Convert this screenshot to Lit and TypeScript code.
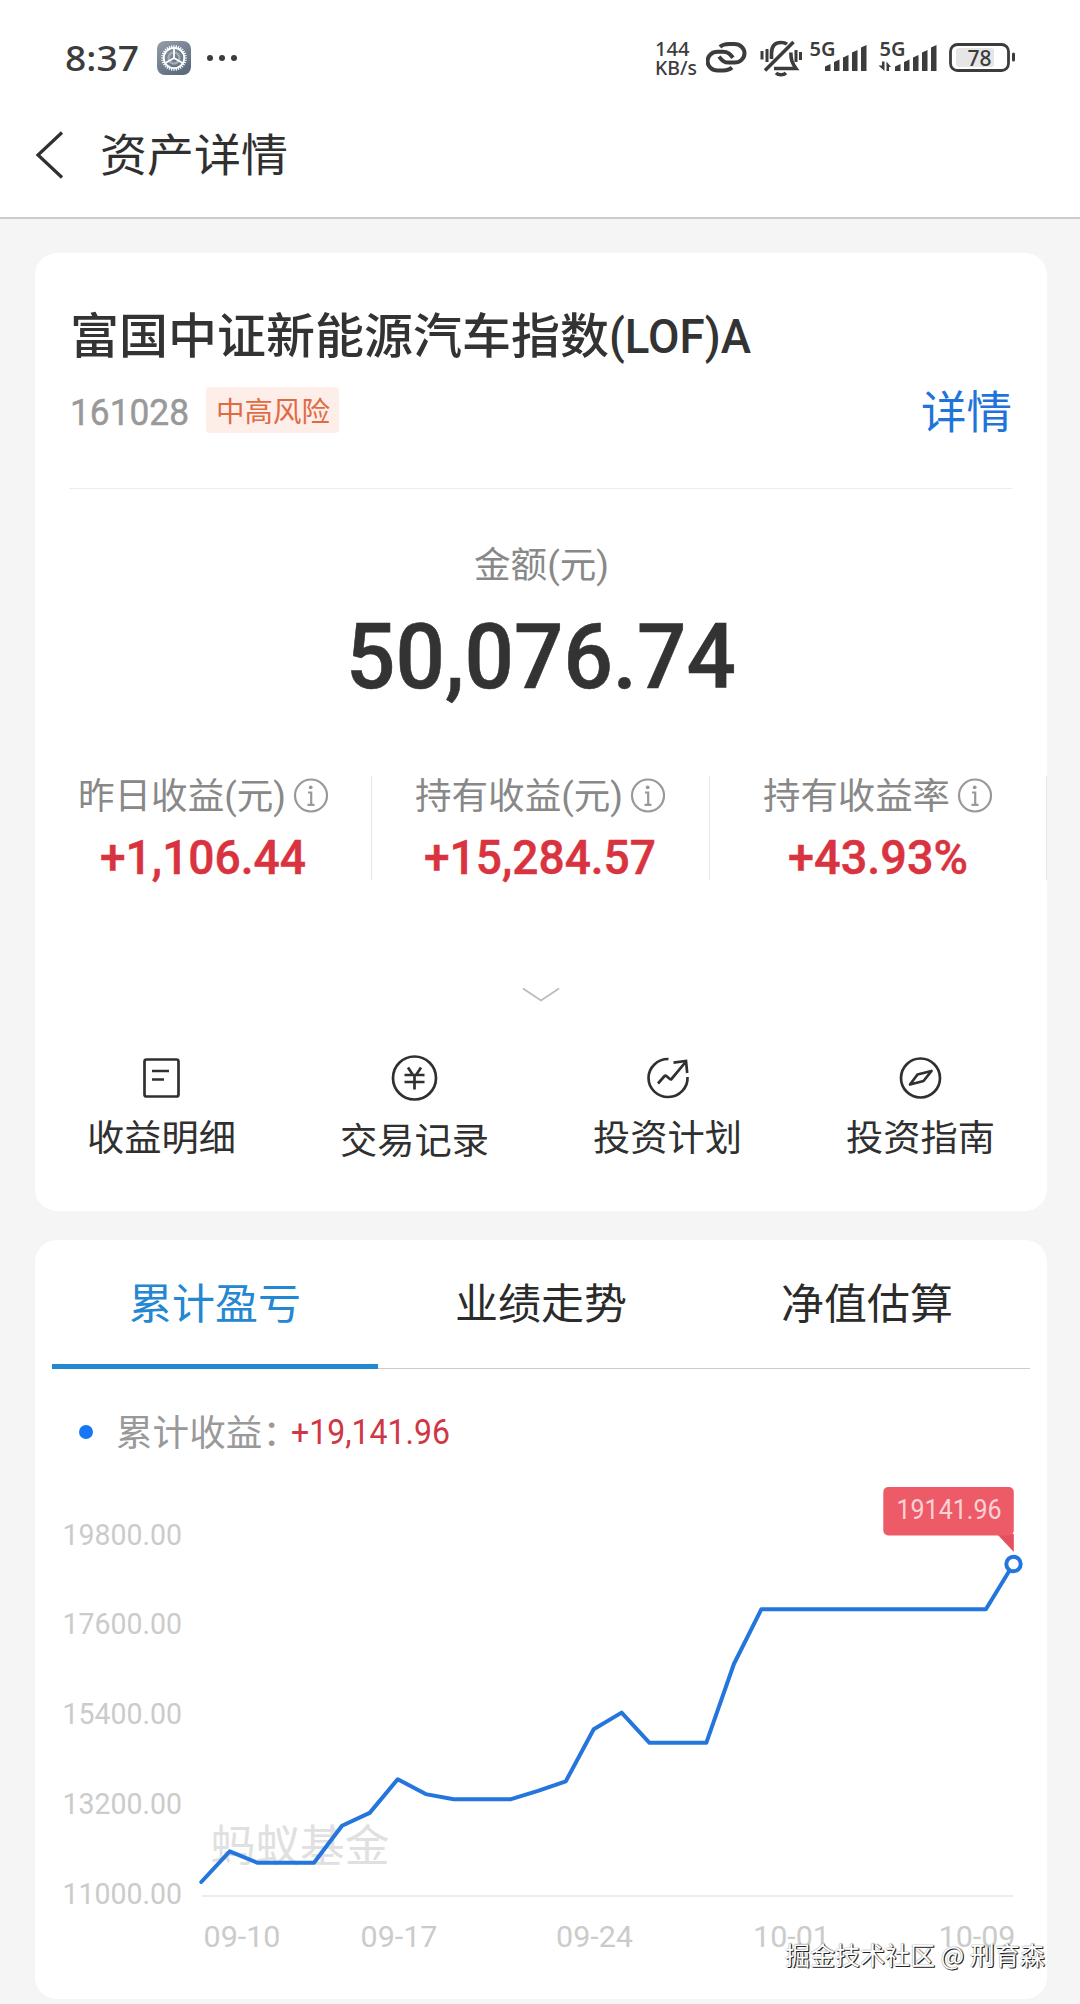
import { LitElement, html, svg, css } from "lit";
import { customElement } from "lit/decorators.js";

/** Single-line text set to an exact advance width. */
const fit = (text: string, cls: string, size: number, width: number) => html`
  <svg class="fit ${cls}" width=${width} height=${size} viewBox="0 0 ${width} ${size}">
    <text x="0" y=${size * 0.88} font-size=${size} textLength=${width} lengthAdjust="spacingAndGlyphs">${text}</text>
  </svg>`;

const TICKS = [
  { label: "19800.00", y: 1544.6 },
  { label: "17600.00", y: 1634 },
  { label: "15400.00", y: 1724.2 },
  { label: "13200.00", y: 1813.6 },
  { label: "11000.00", y: 1903.8 },
];

const DATES = [
  { label: "09-10", x: 203.5, w: 77 },
  { label: "09-17", x: 360.5, w: 77 },
  { label: "09-24", x: 556, w: 77 },
  { label: "10-01", x: 753, w: 77 },
  { label: "10-09", x: 938.5, w: 77 },
];

const POINTS: [number, number][] = [
  [201.3, 1882], [229.7, 1851.4], [257.7, 1862.8], [314, 1862.8], [342, 1825.7],
  [369.7, 1812.9], [397.7, 1779.2], [425.7, 1794.1], [453.7, 1799.3], [510.3, 1799.3],
  [538, 1790.8], [565.8, 1781.3], [593.7, 1729.3], [621.6, 1712.6], [649.5, 1742.8],
  [706.3, 1742.8], [733.9, 1664], [761.4, 1609.2], [985.9, 1609.2], [1013.5, 1564],
];

const STATS = [
  { label: "昨日收益(元)", lw: 208, value: "+1,106.44", vw: 206 },
  { label: "持有收益(元)", lw: 208, value: "+15,284.57", vw: 232 },
  { label: "持有收益率", lw: 187, value: "+43.93%", vw: 180 },
];

const ICONS = {
  list: svg`
    <rect x="6.5" y="5.5" width="34" height="37" rx="2"/>
    <path d="M14 17h17M14 25.5h12"/>`,
  yen: svg`
    <circle cx="23.5" cy="24" r="21.5"/>
    <path d="M17 13.5l5 7.5M30 13.5l-5 7.5M13.500 21h20M13.500 28h20M23.500 21v14.500"/>`,
  plan: svg`
    <path d="M24.500 5A19.500 19 0 1 0 43.500 23"/>
    <path d="M14 29.500l6.600-7.500q.700-.800 1.500-.200l4 3.400q.800.500 1.400-.200L42 7.500"/>
    <path d="M29.500 8.600L42 7l1.200 12"/>`,
  compass: svg`
    <circle cx="23.5" cy="24" r="19.5"/>
    <path stroke-linejoin="round" d="M13 30.500L20.500 20.500 34.500 17 26.500 27z"/>`,
};

const ACTIONS = [
  { icon: ICONS.list, label: "收益明细", low: false },
  { icon: ICONS.yen, label: "交易记录", low: true },
  { icon: ICONS.plan, label: "投资计划", low: false },
  { icon: ICONS.compass, label: "投资指南", low: false },
];

const TABS = ["累计盈亏", "业绩走势", "净值估算"];

const BARS = [7, 11.5, 16, 21, 26];

@customElement("status-bar")
class StatusBar extends LitElement {
  static styles = css`
    :host { display: block; }
    .bar { height: 116px; box-sizing: border-box; display: flex; align-items: center; padding: 0 64px 0 65px; }
    .fit { display: block; overflow: visible; fill: #3c3c3c; }
    .clock { font-family: "Noto Sans", sans-serif; font-weight: 500; margin-top: -2px; }
    .gear { margin-left: 18px; }
    .dots { margin-left: 15px; }
    .rate { margin-left: auto; display: flex; flex-direction: column; width: 44px; }
    .small { font-family: "Noto Sans", sans-serif; font-weight: 500; }
    .icons { display: block; margin-left: 7px; }
    .net { font: 600 19px "Noto Sans", sans-serif; }
    .pct { font: 500 21px "Noto Sans", sans-serif; }
  `;
  signal(x: number) {
    return BARS.map((h, i) => svg`<path fill="#3c3c3c" d="M${x + i * 9} 71v${-(h - 2.5)}l5.5 -2.5v${h}z"/>`);
  }
  render() {
    const teeth = Array.from({ length: 32 }, (_, i) => svg`<path d="M17 4.2v2.4" transform="rotate(${i * 11.25} 17 17)"/>`);
    return html`
      <div class="bar">
        ${fit("8:37", "clock", 35, 74)}
        <svg class="gear" width="34" height="34" viewBox="0 0 34 34">
          <defs><linearGradient id="g" x1="0" y1="0" x2=".6" y2="1">
            <stop offset="0" stop-color="#949eac"/><stop offset="1" stop-color="#5d6b7d"/></linearGradient></defs>
          <rect width="34" height="34" rx="8" fill="url(#g)"/>
          <g fill="none" stroke="#fff"><g stroke-width="1.2">${teeth}</g>
            <circle cx="17" cy="17" r="10.2" stroke-width="1.8"/>
            <circle cx="17" cy="17" r="5.5" stroke="#a3adb9" stroke-width="2.4"/>
            <path stroke-width="1.8" d="M17 17V7M17 17l-8.6 5M17 17l8.6 5"/></g>
        </svg>
        <svg class="dots" width="32" height="8" viewBox="0 0 32 8" fill="#3c3c3c">
          <circle cx="4" cy="4" r="3"/><circle cx="16" cy="4" r="3"/><circle cx="28" cy="4" r="3"/>
        </svg>
        <div class="rate">${fit("144", "small", 19.5, 34.5)}${fit("KB/s", "small", 19.5, 42)}</div>
        <svg class="icons" width="310" height="60" viewBox="706 28 310 60" fill="none" stroke="#3c3c3c">
          <g stroke-width="4">
            <path d="M720 47C723 44 726 44 729 44H734.500A10 9.300 0 0 1 734.500 62.600H729C724 62.600 722 60.500 719 56.600"/>
            <path d="M732 67.500C729 70.400 726 70.400 723 70.400H717.500A10 9.300 0 0 1 717.500 51.800H723C728 51.800 730 54 733 57.800"/>
          </g>
          <g stroke-width="3.600">
            <path d="M793.500 42L765 70.500"/>
            <path d="M771.500 59V53.500C771.500 46 775 42.500 781 42.500C783.500 42.500 785.500 43 787 44.200"/>
            <path d="M790.800 52.500C791 60 792 63 796 68.500H774"/>
            <path stroke-width="3" d="M762 51v8.500M767 49v13M796 50v12M800.500 52v8"/>
            <path d="M776 73c2.500 2.400 7.500 2.400 10 0"/>
          </g>
          <g stroke="none" fill="#3c3c3c">
            <text class="net" x="809.500" y="56" textLength="26" lengthAdjust="spacingAndGlyphs">5G</text>
            <text class="net" x="879.500" y="56" textLength="26" lengthAdjust="spacingAndGlyphs">5G</text>
            ${this.signal(825)}${this.signal(895)}
            <path d="M882 61.500h2.500v9.500l-6-5.500h3.500zM886.500 71v-9.500l4.500 5.500h-2v4z"/>
            <rect x="956" y="48" width="38" height="19" rx="3" fill="#e6e6e6"/>
            <rect x="1012" y="52.500" width="3" height="9" rx="1.500"/>
            <text class="pct" x="967.500" y="65.500" textLength="24" lengthAdjust="spacingAndGlyphs">78</text>
          </g>
          <rect x="950.500" y="44.500" width="58" height="26" rx="7" stroke-width="2.800"/>
        </svg>
      </div>`;
  }
}

@customElement("profit-chart")
class ProfitChart extends LitElement {
  static styles = css`
    :host { display: block; }
    .chart { display: block; }
    .tick { font: 400 30px Roboto, sans-serif; fill: #cbcbcb; }
    .mark { font: 400 44px "Noto Sans CJK SC", sans-serif; fill: #e0e0e0; }
    .tip { font: 400 28.5px Roboto, sans-serif; fill: #fcd2d5; }
  `;
  render() {
    const end = POINTS[POINTS.length - 1];
    return html`
      <svg class="chart" width="1012" height="548" viewBox="35 1451 1012 548">
        ${TICKS.map((t) => svg`<text class="tick" x="62.500" y=${t.y} textLength="119.500" lengthAdjust="spacingAndGlyphs">${t.label}</text>`)}
        <path d="M202 1896H1013" stroke="#ececec" stroke-width="2"/>
        <text class="mark" x="210.500" y="1861.500" textLength="179" lengthAdjust="spacingAndGlyphs">蚂蚁基金</text>
        <polyline points=${POINTS.map((p) => p.join(",")).join(" ")} fill="none" stroke="#2475dc"
          stroke-width="4" stroke-linejoin="round" stroke-linecap="round"/>
        <circle cx=${end[0]} cy=${end[1]} r="7.200" fill="#fff" stroke="#2475dc" stroke-width="4"/>
        <path d="M997 1534H1013.800V1552z" fill="#e5505f"/>
        <rect x="883.300" y="1487" width="130.500" height="48.500" rx="5" fill="#ed5b69"/>
        <text class="tip" x="896.500" y="1518.800" textLength="105" lengthAdjust="spacingAndGlyphs">19141.96</text>
        ${DATES.map((d) => svg`<text class="tick" x=${d.x} y="1946.500" textLength=${d.w} lengthAdjust="spacingAndGlyphs">${d.label}</text>`)}
      </svg>`;
  }
}

@customElement("app-root")
class AppRoot extends LitElement {
  static styles = css`
    :host { display: block; }
    .page { position: relative; width: 1080px; height: 2004px; overflow: hidden; background: #f5f5f5; font-family: Roboto, "Noto Sans CJK SC", sans-serif; }
    .header { background: #fff; height: 219px; box-sizing: border-box; border-bottom: 2px solid #cbcbcb; }
    .nav { display: flex; align-items: center; height: 77px; padding-left: 34px; gap: 36px; }
    .fit { display: block; overflow: visible; }
    .nav-title { fill: #303030; font-weight: 400; }
    .card { width: 1012px; margin-left: 35px; border-radius: 22px; background: #fff; box-sizing: border-box; }
    .summary { height: 958px; margin-top: 34px; padding-top: 58px; }
    .name { display: flex; margin-left: 35px; height: 48px; fill: #333; font-weight: 500; }
    .meta { display: flex; align-items: center; height: 46px; margin: 28px 35px 0 35px; }
    .code { fill: #999; font-weight: 400; stroke: #999; stroke-width: 0.5px; }
    .tag { display: flex; align-items: center; justify-content: center; width: 133px; height: 46px; margin-left: 17px; border-radius: 4px; background: #fdeeea; }
    .tag-text { fill: #e26a42; margin-top: 2px; }
    .more { fill: #1f74da; margin-left: auto; margin-top: 2px; }
    .rule { height: 1px; background: #ececec; margin: 55px 35px 0 34px; }
    .amount { display: flex; flex-direction: column; align-items: center; }
    .amount-label { fill: #888; margin-top: 57px; }
    .amount-value { fill: #333; font-weight: 500; margin-top: 27px; stroke: #333; stroke-width: 0.6px; }
    .stats { display: grid; grid-template-columns: repeat(3, 1fr); margin-top: 77px; height: 103px; }
    .stat { display: flex; flex-direction: column; align-items: center; border-right: 1px solid #e6e6e6; gap: 17px; }
    .stat-head { display: flex; align-items: center; gap: 7px; height: 38px; }
    .stat-label { fill: #888; }
    .stat-value { fill: #d93340; font-weight: 500; stroke: #d93340; stroke-width: 0.5px; }
    .expand { display: block; margin: 108px auto 0; }
    .actions { display: grid; grid-template-columns: repeat(4, 1fr); margin-top: 52px; }
    .action { display: flex; flex-direction: column; align-items: center; gap: 17px; }
    .low { gap: 19.5px; }
    .glyph { display: block; }
    .action-label { fill: #303030; }
    .trend { height: 759px; margin-top: 29px; }
    .tabs { display: grid; grid-template-columns: repeat(3, 1fr); margin: 0 17px; height: 129px; box-sizing: border-box; border-bottom: 1px solid #ccc; }
    .tab { display: flex; justify-content: center; padding-top: 41.5px; fill: #2b2b2b; height: 129px; box-sizing: border-box; }
    .active { fill: #2387d2; border-bottom: 5px solid #2387d2; }
    .legend { display: flex; align-items: center; height: 38px; margin-top: 44px; padding-left: 44px; }
    .dot { width: 14px; height: 14px; border-radius: 50%; background: #1677f5; margin-right: 23px; }
    .legend-label { fill: #999; }
    .legend-value { fill: #cf3745; margin-left: -8px; margin-top: -3px; }
    .credit { position: absolute; left: 785px; top: 1936px; font: 400 25px/36px "Noto Sans CJK SC", sans-serif; white-space: nowrap; color: #fff; text-shadow: 1px 1px 0 #222, 1px 0 1px #555, 0 0 1px #777; }
  `;
  render() {
    return html`
      <div class="page">
        <div class="header">
          <status-bar></status-bar>
          <div class="nav">
            <svg width="30" height="48" viewBox="0 0 30 48" fill="none" stroke="#303030" stroke-width="3.2"><path d="M28 1.500L4 24l24 22.500"/></svg>
            ${fit("资产详情", "nav-title", 45, 188)}
          </div>
        </div>

        <div class="card summary">
          <div class="name">${fit("富国中证新能源汽车指数", "zh", 48, 539)}${fit("(LOF)A", "en", 48, 142)}</div>
          <div class="meta">
            ${fit("161028", "code", 37, 119)}
            <div class="tag">${fit("中高风险", "tag-text", 28, 114)}</div>
            ${fit("详情", "more", 45, 91)}
          </div>
          <div class="rule"></div>
          <div class="amount">
            ${fit("金额(元)", "amount-label", 36, 135)}
            ${fit("50,076.74", "amount-value", 90, 390)}
          </div>
          <div class="stats">
            ${STATS.map((s) => html`
              <div class="stat">
                <div class="stat-head">
                  ${fit(s.label, "stat-label", 36, s.lw)}
                  <svg width="35" height="35" viewBox="0 0 35 35" fill="none" stroke="#999" stroke-width="2.200">
                    <circle cx="18" cy="17.500" r="16"/>
                    <circle cx="17.700" cy="9.300" r="1.900" fill="#999" stroke="none"/>
                    <path d="M15 14.500h3.200v12.300M14.500 26.800h7"/>
                  </svg>
                </div>
                ${fit(s.value, "stat-value", 49, s.vw)}
              </div>`)}
          </div>
          <svg class="expand" width="38" height="15" viewBox="0 0 38 15" fill="none" stroke="#bbb" stroke-width="1.800"><path d="M1 1.500l18 12 18-12"/></svg>
          <div class="actions">
            ${ACTIONS.map((a) => html`
              <div class="action ${a.low ? "low" : ""}">
                <svg class="glyph" width="48" height="48" viewBox="0 0 48 48" fill="none" stroke="#303030" stroke-width="2.700">${a.icon}</svg>
                ${fit(a.label, "action-label", 36.5, 149)}
              </div>`)}
          </div>
        </div>

        <div class="card trend">
          <div class="tabs">
            ${TABS.map((t, i) => html`<div class="tab ${i === 0 ? "active" : ""}">${fit(t, "tab-text", 42, 172)}</div>`)}
          </div>
          <div class="legend">
            <span class="dot"></span>
            ${fit("累计收益：", "legend-label", 36, 183)}
            ${fit("+19,141.96", "legend-value", 35, 159)}
          </div>
          <profit-chart></profit-chart>
        </div>
        <div class="credit">掘金技术社区 @ 刑育森</div>
      </div>`;
  }
}
